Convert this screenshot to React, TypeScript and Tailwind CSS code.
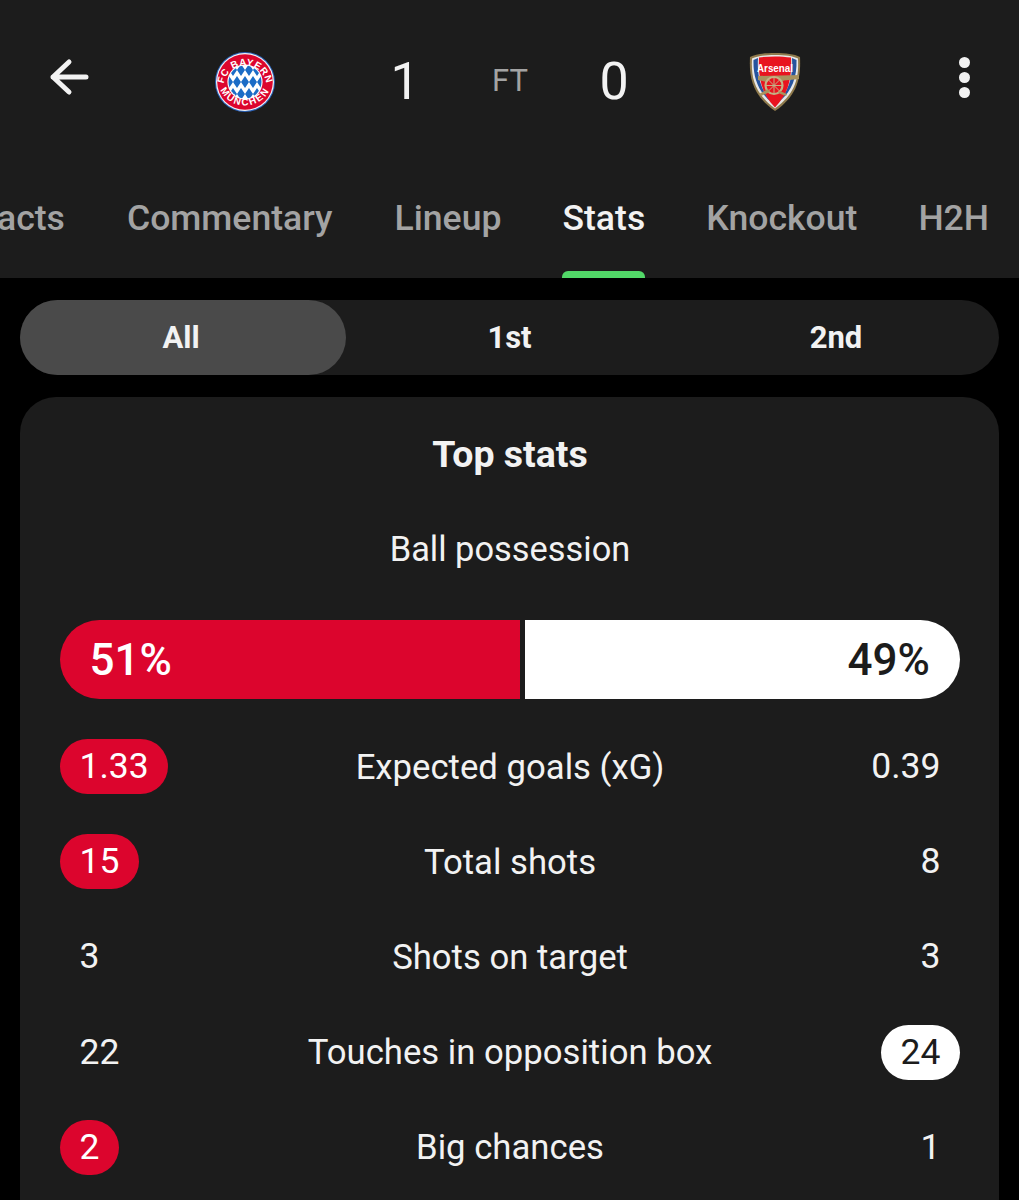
import React from "react";

const Bayern = () => (
  <svg width="62" height="62" viewBox="0 0 62 62">
    <defs>
      <path id="bTop" d="M9.5 36 A21.5 21.5 0 1 1 52.5 36" />
      <path id="bBot" d="M3.5 27 A27.5 27.5 0 1 0 58.5 27" />
      <clipPath id="bClip"><circle cx="31" cy="31" r="16.5" /></clipPath>
    </defs>
    <circle cx="31" cy="31" r="30" fill="#2a62b8" />
    <circle cx="31" cy="31" r="29" fill="#f4f4f4" />
    <circle cx="31" cy="31" r="27.8" fill="#dc052d" />
    <circle cx="31" cy="31" r="17.6" fill="#fff" />
    <g clipPath="url(#bClip)" fill="#1b6cc6">
      <path d="M15 19l4-6 4 6-4 6zM23 19l4-6 4 6-4 6zM31 19l4-6 4 6-4 6zM39 19l4-6 4 6-4 6z" />
      <path d="M11 31l4-6 4 6-4 6zM19 31l4-6 4 6-4 6zM27 31l4-6 4 6-4 6zM35 31l4-6 4 6-4 6zM43 31l4-6 4 6-4 6z" />
      <path d="M15 43l4-6 4 6-4 6zM23 43l4-6 4 6-4 6zM31 43l4-6 4 6-4 6zM39 43l4-6 4 6-4 6z" />
    </g>
    <text fill="#fff" fontFamily="'Liberation Sans', sans-serif" fontWeight="700" fontSize="9.8" letterSpacing="0.5">
      <textPath href="#bTop" startOffset="50%" textAnchor="middle">FC BAYERN</textPath>
    </text>
    <text fill="#fff" fontFamily="'Liberation Sans', sans-serif" fontWeight="700" fontSize="9.8" letterSpacing="1.6">
      <textPath href="#bBot" startOffset="50%" textAnchor="middle">MÜNCHEN</textPath>
    </text>
  </svg>
);

const Arsenal = () => (
  <svg width="54" height="62" viewBox="0 0 54 62">
    <path d="M27 2 C38 2 46 3 52 6 C53 26 50 44 27 60 C4 44 1 26 2 6 C8 3 16 2 27 2Z" fill="#8f7a4c" />
    <path d="M27 4 C37 4 45 5 50 7.5 C51 26 48 42 27 57.5 C6 42 3 26 4 7.5 C9 5 17 4 27 4Z" fill="#e8e8e8" />
    <path d="M5.5 9 L10 7 C9 24 12 36 22 50 C10 40 5 26 5.5 9Z" fill="#26549e" />
    <path d="M48.5 9 L44 7 C45 24 42 36 32 50 C44 40 49 26 48.5 9Z" fill="#26549e" />
    <path d="M11 6.5 C21 5 33 5 43 6.5 C44 26 41 42 27 56.5 C13 42 10 26 11 6.5Z" fill="#e8141f" />
    <text x="27" y="20.5" textAnchor="middle" fill="#fff" fontFamily="'Liberation Sans', sans-serif" fontWeight="700" fontSize="11.5" textLength="36" lengthAdjust="spacingAndGlyphs">Arsenal</text>
    <path d="M10 25 L51 24 L51 28 L36 29.5 L33 31 L19 31 L10 29Z" fill="#a8925e" />
    <circle cx="26" cy="34.5" r="8.5" fill="#e8141f" stroke="#c4b184" strokeWidth="2.2" />
    <path d="M26 26.5v16M18 34.5h16M20.5 29l11 11M31.5 29l-11 11" stroke="#c4b184" strokeWidth="1" />
    <path d="M20 38 L11 43 L13 45 L22 41Z" fill="#a8925e" />
    <path d="M32 40 L39 43 L38 45 L30 42Z" fill="#a8925e" />
  </svg>
);

const Tab = ({ label, active, className }: { label: string; active?: boolean; className: string }) => (
  <div className={`relative h-full pb-[4px] flex items-center shrink-0 ${className} ${active ? "text-[#f2f2f2]" : "text-[#a3a3a3]"}`}>
    {label}
    {active && <span className="absolute left-0 right-0 bottom-0 h-[7px] rounded-t-[6px] bg-[#52d868]" />}
  </div>
);

const Row = ({ label, left, right, leftPill, rightPill }: { label: string; left: string; right: string; leftPill?: boolean; rightPill?: boolean }) => (
  <div className="h-[95.2px] flex items-center justify-between relative text-[35.5px] text-[#f2f2f2]">
    <span className={`h-[55px] px-[19.5px] flex items-center rounded-full ${leftPill ? "bg-[#dc052d] text-white" : ""}`}>{left}</span>
    <span className="absolute inset-0 flex items-center justify-center text-[34.7px]">{label}</span>
    <span className={`h-[55px] px-[19.5px] flex items-center rounded-full ${rightPill ? "bg-white text-[#1c1c1c]" : ""}`}>{right}</span>
  </div>
);

export default function App() {
  return (
    <div className="w-[1019px] h-[1200px] overflow-hidden bg-black font-['Roboto',sans-serif]">
      <div className="h-[278px] bg-[#1c1c1c] flex flex-col">
        <div className="h-[163px] flex items-center">
          <div className="w-[140px] flex justify-center -mt-[9px]">
            <svg width="44" height="40" viewBox="0 0 44 40" fill="none" stroke="#f2f2f2" strokeWidth="5" strokeLinecap="round" strokeLinejoin="round">
              <path d="M38 20H5M21 5L5 20L21 35" />
            </svg>
          </div>
          <div className="w-[210px] flex justify-center"><Bayern /></div>
          <div className="w-[110px] text-center text-[52px] text-[#f2f2f2]">1</div>
          <div className="w-[100px] text-center text-[31px] text-[#a3a3a3]">FT</div>
          <div className="w-[108px] text-center text-[52px] text-[#f2f2f2]">0</div>
          <div className="w-[214px] flex justify-center"><Arsenal /></div>
          <div className="flex-1 flex justify-end pr-[49.5px] -mt-[9px]">
            <div className="flex flex-col gap-[4px]">
              <span className="w-[11px] h-[11px] rounded-full bg-[#f2f2f2]" />
              <span className="w-[11px] h-[11px] rounded-full bg-[#f2f2f2]" />
              <span className="w-[11px] h-[11px] rounded-full bg-[#f2f2f2]" />
            </div>
          </div>
        </div>
        <div className="flex-1 flex overflow-hidden text-[35.6px] font-medium whitespace-nowrap">
          <Tab label="Facts" className="-ml-[22px] mr-[62px]" />
          <Tab label="Commentary" className="mr-[62px]" />
          <Tab label="Lineup" className="mr-[61px]" />
          <Tab label="Stats" active className="mr-[61px]" />
          <Tab label="Knockout" className="mr-[61px]" />
          <Tab label="H2H" className="" />
        </div>
      </div>
      <div className="px-[20px] pt-[22px]">
        <div className="h-[75px] rounded-full bg-[#1c1c1c] flex items-center text-[31px] font-bold text-[#f2f2f2]">
          <div className="w-[326px] h-full pr-[4px] pt-[2px] rounded-full bg-[#4a4a4a] flex items-center justify-center">All</div>
          <div className="w-[327px] pt-[2px] text-center">1st</div>
          <div className="flex-1 pt-[2px] text-center">2nd</div>
        </div>
        <div className="mt-[22px] rounded-t-[36px] bg-[#1c1c1c] h-[803px] pl-[40px] pr-[39px]">
          <div className="pt-[32px] text-center text-[37.5px] font-bold text-[#f2f2f2] leading-[50px]">Top stats</div>
          <div className="mt-[45px] text-center text-[34.4px] text-[#f2f2f2] leading-[50px]">Ball possession</div>
          <div className="mt-[46px] h-[79px] flex gap-[5px] text-[44px] font-medium">
            <div className="w-[460px] bg-[#dc052d] rounded-l-full flex items-center pl-[29.5px] text-white">51%</div>
            <div className="flex-1 bg-white rounded-r-full flex items-center justify-end pr-[30px] text-[#1c1c1c]">49%</div>
          </div>
          <div className="mt-[20px]">
            <Row label="Expected goals (xG)" left="1.33" right="0.39" leftPill />
            <Row label="Total shots" left="15" right="8" leftPill />
            <Row label="Shots on target" left="3" right="3" />
            <Row label="Touches in opposition box" left="22" right="24" rightPill />
            <Row label="Big chances" left="2" right="1" leftPill />
          </div>
        </div>
      </div>
    </div>
  );
}
